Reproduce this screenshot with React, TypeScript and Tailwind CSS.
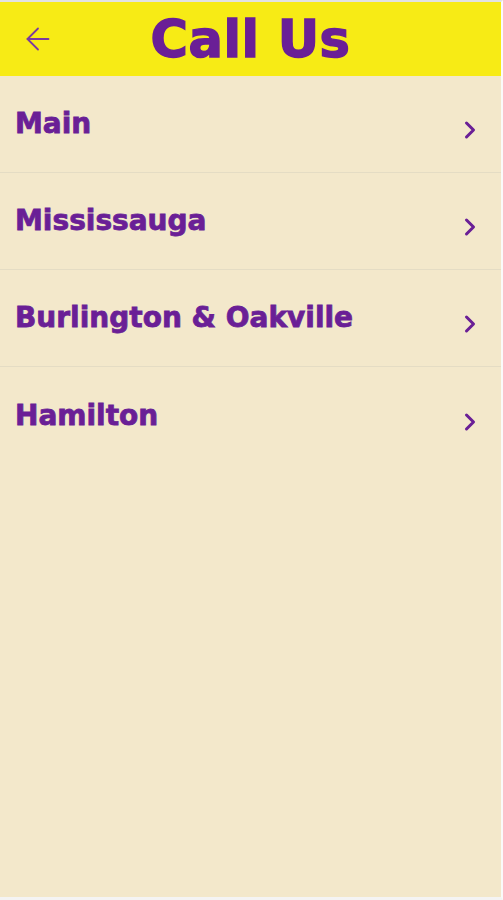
import React from 'react';
import { ArrowLeft, ChevronRight } from 'lucide-react';

const locations = ['Main', 'Mississauga', 'Burlington & Oakville', 'Hamilton'];

const App: React.FC = () => {
  return (
    <div
      className="flex h-[900px] w-[503px] flex-col border-t-2 border-r-2 border-b-[3px] border-t-[#e2e2e2] border-r-[#fafafa] border-b-[#f4f4f4] bg-[#f3e8cb]"
      style={{ fontFamily: '"DejaVu Sans", sans-serif' }}
    >
      {/* Header */}
      <header className="relative flex h-[74px] shrink-0 items-center justify-center bg-[#f7eb15]">
        <button className="absolute left-[20px] top-[19px] text-[#7b3aa0]">
          <ArrowLeft size={36} strokeWidth={1.2} />
        </button>
        <h1 className="text-[51px] font-bold leading-none tracking-[0.5px] text-[#6a1f96] [-webkit-text-stroke:1.5px_#6a1f96]">
          Call Us
        </h1>
      </header>

      {/* List */}
      <ul className="flex flex-col">
        {locations.map((name, i) => (
          <li
            key={name}
            className={`flex h-[97px] items-center justify-between pl-[15px] pr-[17px] ${
              i < locations.length - 1 ? 'border-b border-[#e4dcc4]' : ''
            }`}
          >
            <span className="text-[28px] font-bold leading-none text-[#6a1f96] [-webkit-text-stroke:0.8px_#6a1f96]">
              {name}
            </span>
            <ChevronRight size={28} strokeWidth={2.6} className="mt-[12px] text-[#6a1f96]" />
          </li>
        ))}
      </ul>
    </div>
  );
};

export default App;
